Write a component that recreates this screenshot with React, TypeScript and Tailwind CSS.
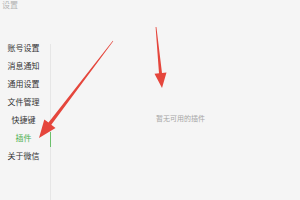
const menu = ['账号设置', '消息通知', '通用设置', '文件管理', '快捷键', '插件', '关于微信'];
const active = '插件';

function Arrows() {
  return (
    <svg
      className="pointer-events-none absolute left-0 top-0"
      width="300"
      height="200"
      viewBox="0 0 300 200"
    >
      {/* long arrow toward the sidebar */}
      <polygon points="113.2,41.2 112.8,40.8 48.5,122.6 44.3,119.4 39,138 55.5,128 51.3,124.8" fill="#e5463c" />
      {/* short arrow toward the empty panel */}
      <polygon points="156.4,27 155.6,27 159,73.3 154.5,73.7 162,88 166.5,72.5 162,72.9" fill="#e5463c" />
    </svg>
  );
}

export default function App() {
  return (
    <div
      className="relative flex h-[200px] w-[300px] flex-col overflow-hidden bg-[#f5f5f5]"
      style={{ fontFamily: '"Noto Sans CJK SC", "Noto Sans", sans-serif' }}
    >
      <div className="h-[39px] pl-[2px] text-[8px] leading-[10px] text-[#b3b3b3]">设置</div>

      <div className="flex flex-1">
        <div className="flex w-[50px] flex-col pr-[3px]">
          {menu.map((item) => (
            <div
              key={item}
              className={
                item === active
                  ? 'flex h-[18px] items-center justify-center text-[8px] text-[#4caf50]'
                  : 'flex h-[18px] items-center justify-center text-[8px] text-[#333333]'
              }
            >
              {item}
            </div>
          ))}
        </div>

        <div className="relative mt-[5px] w-px bg-[#e6e6e6]">
          <div className="absolute left-0 top-[88px] h-[15px] w-px bg-[#6cc06c]" />
        </div>

        <div className="flex flex-1 items-center justify-center pb-[3px] pl-[10px] text-[7px] text-[#a6a6a6]">
          暂无可用的插件
        </div>
      </div>

      <Arrows />
    </div>
  );
}
